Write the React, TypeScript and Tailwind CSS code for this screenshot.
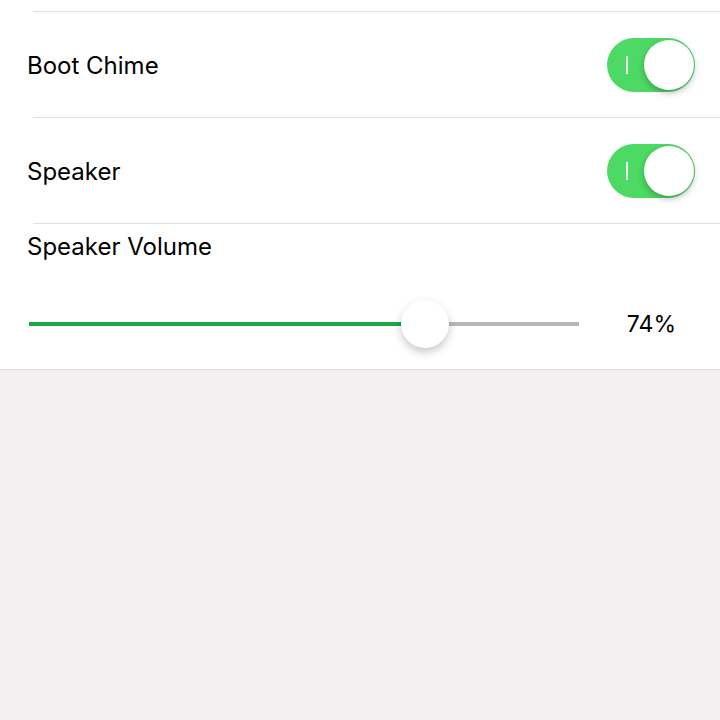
import React from "react";

function Toggle() {
  return (
    <div className="relative w-[88px] h-[54px] rounded-full bg-[#4cd964]">
      <div className="absolute left-[19px] top-[18px] w-[2px] h-[18px] bg-white/90" />
      <div className="absolute right-[1px] top-[2px] w-[50px] h-[50px] rounded-full bg-white shadow-[0_3px_6px_rgba(0,0,0,0.25)]" />
    </div>
  );
}

export default function App() {
  const pct = 74;
  return (
    <div className="w-[720px] h-[720px] bg-[#f2f0f1] font-['Inter',sans-serif] text-black">
      <div className="bg-white border-b border-[#dcdcdc]">
        <div className="h-[11px]" />
        <div className="ml-[33px] h-px bg-[#e0e0e0]" />
        <div className="flex items-center justify-between h-[105px] pl-[27px] pr-[25px]">
          <span className="text-[24px] leading-none pt-[3px]">Boot Chime</span>
          <Toggle />
        </div>
        <div className="ml-[33px] h-px bg-[#e0e0e0]" />
        <div className="flex items-center justify-between h-[105px] pl-[27px] pr-[25px]">
          <span className="text-[24px] leading-none pt-[3px]">Speaker</span>
          <Toggle />
        </div>
        <div className="ml-[33px] h-px bg-[#e0e0e0]" />
        <div className="pl-[27px] pt-[9px]">
          <span className="text-[24px] leading-[28px] block">Speaker Volume</span>
        </div>
        <div className="flex items-center h-[48px] mt-[39px] mb-[21px] pl-[29px] pr-[44px]">
          <div className="relative w-[550px] h-[4px] bg-[#b8b8b8]">
            <div className="absolute left-0 top-0 h-full bg-[#1fa548]" style={{ width: `${(396 / 550) * 100}%` }} />
            <div className="absolute top-1/2 -translate-y-1/2 -translate-x-1/2 w-[48px] h-[48px] rounded-full bg-white shadow-[0_4px_8px_rgba(0,0,0,0.22)]" style={{ left: `${(396 / 550) * 100}%` }} />
          </div>
          <span className="ml-auto text-[23px] leading-none">{pct}%</span>
        </div>
      </div>
    </div>
  );
}
